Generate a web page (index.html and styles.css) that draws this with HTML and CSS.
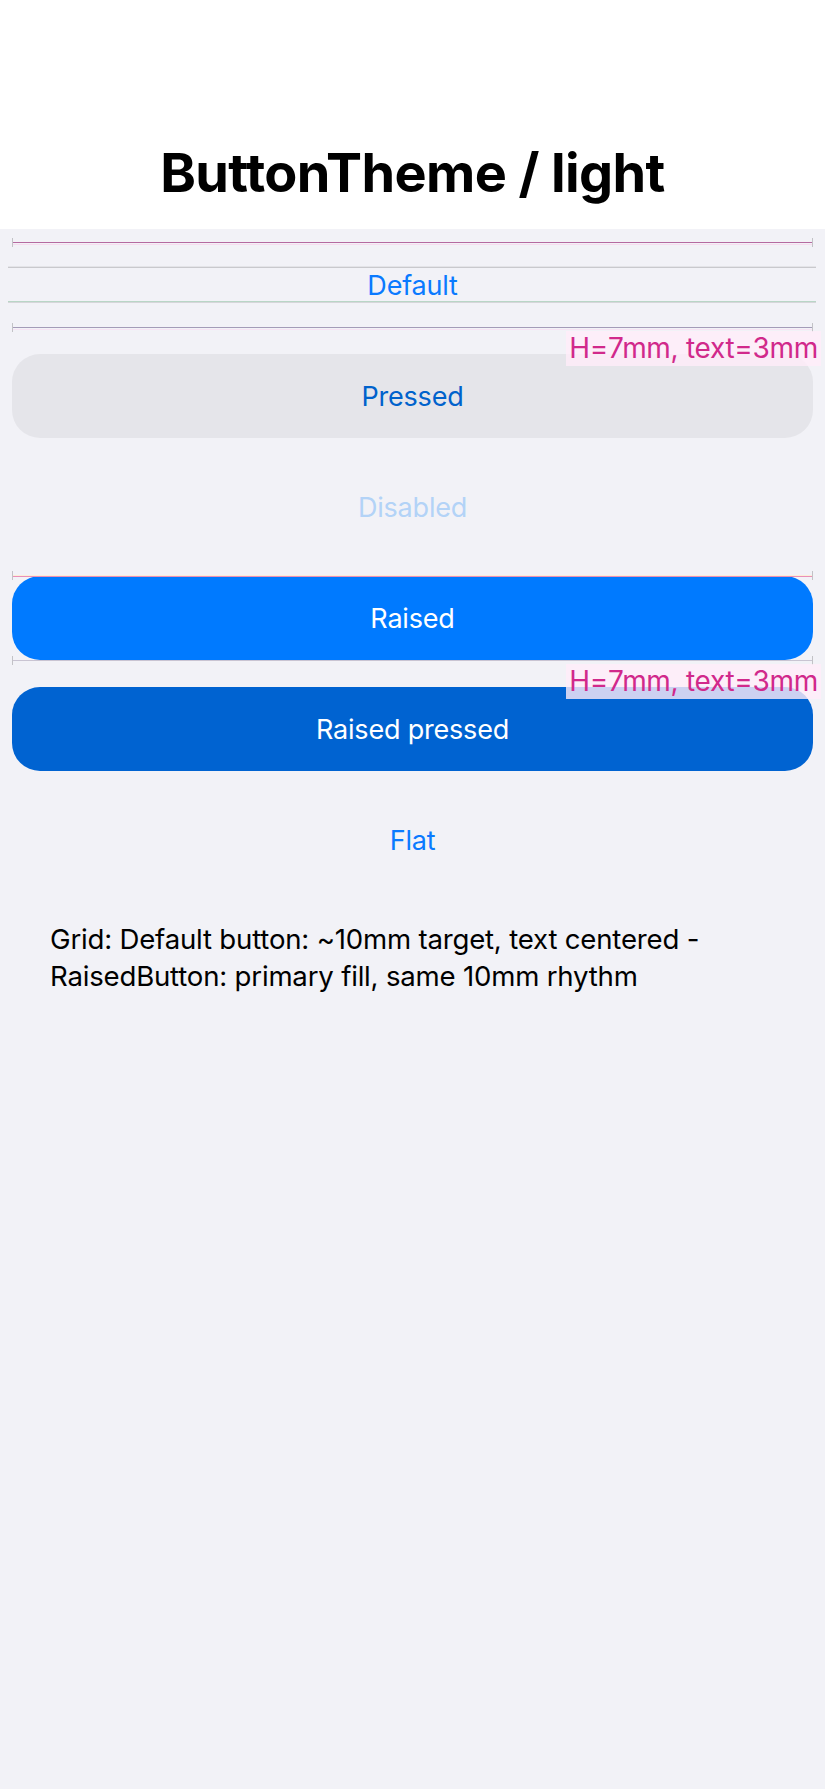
FILE: index.html
```html
<!DOCTYPE html>
<html>

<head>
    <meta charset="utf-8">
    <title>ButtonTheme / light</title>
    <meta name="viewport" content="width=device-width, initial-scale=1">
    <link rel="stylesheet" href="styles.css">
</head>

<body>
    <header class="top">
        <h1 class="title">ButtonTheme / light</h1>
    </header>

    <main class="sheet">
        <!-- default: row box + text box guides -->
        <div class="row guided">
            <span class="gl gl-box-top"></span>
            <span class="gl gl-txt-top"></span>
            <span class="gl gl-txt-bot"></span>
            <span class="gl gl-box-bot"></span>
            <span class="tick tick-tl"></span>
            <span class="tick tick-tr"></span>
            <span class="tick tick-bl"></span>
            <span class="tick tick-br"></span>
            <button class="btn btn-plain">Default</button>
            <span class="note">H=7mm, text=3mm</span>
        </div>

        <div class="row">
            <button class="btn btn-pressed">Pressed</button>
        </div>

        <div class="row">
            <button class="btn btn-disabled" disabled>Disabled</button>
        </div>

        <div class="row guided">
            <span class="gl gl-raise-top"></span>
            <span class="gl gl-raise-bot"></span>
            <span class="tick tick-tl"></span>
            <span class="tick tick-tr"></span>
            <span class="tick tick-bl"></span>
            <span class="tick tick-br"></span>
            <button class="btn btn-raised">Raised</button>
            <span class="note">H=7mm, text=3mm</span>
        </div>

        <div class="row">
            <button class="btn btn-raised-pressed">Raised pressed</button>
        </div>

        <div class="row">
            <button class="btn btn-plain">Flat</button>
        </div>

        <p class="footnote">Grid: Default button: ~10mm target, text centered -<br>RaisedButton: primary fill, same 10mm rhythm</p>
    </main>
</body>

</html>
```

FILE: styles.css
```css
html, body {
    margin: 0;
    padding: 0;
}

body {
    background: #f2f2f7;
    font-family: Inter, "Noto Sans", sans-serif;
    min-height: 1789px;
}

.top {
    background: #fff;
    height: 229px;
    display: flex;
    align-items: flex-end;
    justify-content: center;
}

.title {
    margin: 0 0 26px 0;
    font-size: 54px;
    font-weight: 700;
    letter-spacing: -0.6px;
    line-height: 60px;
    color: #000;
}

.sheet {
    display: flex;
    flex-direction: column;
    gap: 27px;
    padding: 14px 12px 0 12px;
}

.row {
    position: relative;
    height: 84px;
    display: flex;
}

.btn {
    flex: 1;
    border: none;
    border-radius: 28px;
    background: transparent;
    font-family: inherit;
    font-size: 27px;
    font-weight: 400;
    letter-spacing: -0.2px;
    color: #0a7aff;
    padding: 0;
}

.btn-pressed {
    background: #e5e5ea;
    color: #0062cc;
}

.btn-disabled {
    color: #b3d3f7;
}

.btn-raised {
    background: #007aff;
    color: #fff;
}

.btn-raised-pressed {
    background: #0063d1;
    color: #fff;
}

/* guide lines */
.gl {
    position: absolute;
    height: 1px;
    left: 0;
    right: 0;
}

.gl-box-top {
    top: -1px;
    background: #b56aa0;
    box-shadow: 0 2px 0 #f7dcef;
}

.gl-txt-top {
    top: 24px;
    left: -4px;
    right: -3px;
    background: #c9c9cd;
    box-shadow: 0 -1px 0 #e4e4e8;
}

.gl-txt-bot {
    top: 58px;
    left: -4px;
    right: -3px;
    background: #b9d6c6;
    box-shadow: 0 1px 0 #d6d6da;
}

.gl-box-bot {
    top: 84px;
    background: #a49cb8;
    box-shadow: 0 2px 0 #f7e4f4;
}

.gl-raise-top {
    top: 0;
    background: #e98fb8;
    box-shadow: 0 -1px 0 #fbeed8;
}

.gl-raise-bot {
    top: 84px;
    background: #c9c4d2;
}

.tick {
    position: absolute;
    width: 1px;
    height: 9px;
    background: #c2c2c6;
}

.tick-tl { left: 0; top: -5px; }
.tick-tr { right: 0; top: -5px; }
.tick-bl { left: 0; top: 80px; }
.tick-br { right: 0; top: 80px; }

.note {
    position: absolute;
    z-index: 2;
    right: -8px;
    top: 88px;
    padding: 0 3px;
    height: 35px;
    line-height: 35px;
    font-size: 28px;
    letter-spacing: -0.3px;
    color: #d1298b;
    background: rgba(255, 236, 249, 0.8);
    white-space: nowrap;
}

.footnote {
    margin: 12px 0 0 38px;
    font-size: 27.6px;
    letter-spacing: -0.2px;
    line-height: 37px;
    color: #000;
}
```
